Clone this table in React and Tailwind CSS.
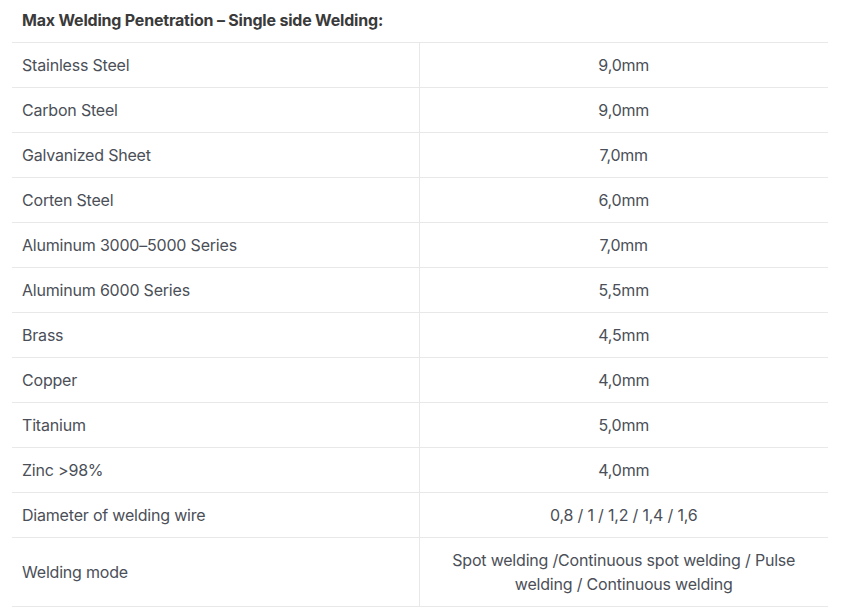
export default function App() {
  const rows = [
    ["Stainless Steel", "9,0mm"],
    ["Carbon Steel", "9,0mm"],
    ["Galvanized Sheet", "7,0mm"],
    ["Corten Steel", "6,0mm"],
    ["Aluminum 3000–5000 Series", "7,0mm"],
    ["Aluminum 6000 Series", "5,5mm"],
    ["Brass", "4,5mm"],
    ["Copper", "4,0mm"],
    ["Titanium", "5,0mm"],
    ["Zinc >98%", "4,0mm"],
    ["Diameter of welding wire", "0,8 / 1 / 1,2 / 1,4 / 1,6"],
    ["Welding mode", "Spot welding /Continuous spot welding / Pulse welding / Continuous welding"],
  ];
  return (
    <div className="w-[844px] h-[613px] bg-white px-3" style={{ fontFamily: "Inter, 'Open Sans', sans-serif" }}>
      <table className="w-[816px] border-collapse text-[16px] leading-[24px] text-[#4b4f58] tracking-[-0.2px]">
        <tbody>
          <tr>
            <td colSpan={2} className="px-[10px] pt-[8px] pb-[10px] font-bold text-[#3a3a3a]">
              Max Welding Penetration – Single side Welding:
            </td>
          </tr>
          {rows.map(([a, b], i) => (
            <tr key={i} className="border-t border-b border-[#e8e8e8]">
              <td className="w-[407px] px-[10px] py-[10px] border-r border-[#e8e8e8] align-middle">{a}</td>
              <td className="px-[20px] py-[10px] text-center align-middle">{b}</td>
            </tr>
          ))}
        </tbody>
      </table>
    </div>
  );
}
